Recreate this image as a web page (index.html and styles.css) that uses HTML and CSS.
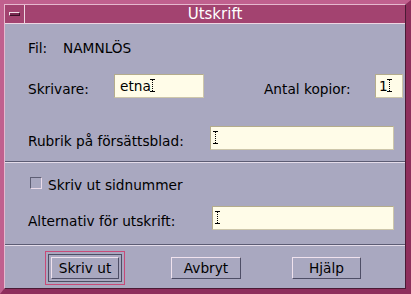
FILE: index.html
```html
<!DOCTYPE html>
<html>
<head>
<meta charset="utf-8">
<link rel="stylesheet" href="styles.css">
</head>
<body>
<div class="window">
  <div class="inner">
    <div class="titlebar">
      <div class="menubtn"><span class="bar"></span></div>
      <div class="title">Utskrift</div>
    </div>
    <div class="content">
      <section class="sec1">
        <div class="row row-fil"><span class="lbl lbl-fil">Fil:</span><span class="val">NAMNLÖS</span></div>
        <div class="row row-printer">
          <span class="lbl lbl-printer">Skrivare:</span>
          <div class="field f-printer"><span class="ftext">etna</span><svg class="ibeam ibeam-over" width="5" height="13" viewBox="0 0 5 13"><path d="M0 0.5H5M0 12.5H5" stroke="#000"/><path d="M2.5 1V12" stroke="#000" stroke-dasharray="1 1"/></svg></div>
          <span class="lbl lbl-copies">Antal kopior:</span>
          <div class="field f-copies"><span class="ftext">1</span><svg class="ibeam ibeam-over" width="5" height="13" viewBox="0 0 5 13"><path d="M0 0.5H5M0 12.5H5" stroke="#000"/><path d="M2.5 1V12" stroke="#000" stroke-dasharray="1 1"/></svg></div>
        </div>
        <div class="row row-rubrik">
          <span class="lbl lbl-rubrik">Rubrik på försättsblad:</span>
          <div class="field f-rubrik"><svg class="ibeam" width="5" height="13" viewBox="0 0 5 13"><path d="M0 0.5H5M0 12.5H5" stroke="#000"/><path d="M2.5 1V12" stroke="#000" stroke-dasharray="1 1"/></svg></div>
        </div>
      </section>
      <div class="sep sep1"></div>
      <section class="sec2">
        <div class="row row-check"><span class="checkbox"></span><span class="lbl lbl-check">Skriv ut sidnummer</span></div>
        <div class="row row-alt">
          <span class="lbl lbl-alt">Alternativ för utskrift:</span>
          <div class="field f-alt"><svg class="ibeam" width="5" height="13" viewBox="0 0 5 13"><path d="M0 0.5H5M0 12.5H5" stroke="#000"/><path d="M2.5 1V12" stroke="#000" stroke-dasharray="1 1"/></svg></div>
        </div>
      </section>
      <div class="sep sep2"></div>
      <section class="buttons">
        <div class="default-ring"><div class="ring-inner"><button class="btn btn-print">Skriv ut</button></div></div>
        <button class="btn btn-cancel">Avbryt</button>
        <button class="btn btn-help">Hjälp</button>
      </section>
    </div>
  </div>
</div>
</body>
</html>
```

FILE: styles.css
```css
* { box-sizing: border-box; }
html, body { margin: 0; padding: 0; background: #8e2e5c; }
body { font-family: "DejaVu Sans", sans-serif; font-size: 13.7px; color: #000; }

.window {
  width: 411px;
  height: 294px;
  border-style: solid;
  border-width: 4px 5px 5px 4px;
  border-color: #c0608e #8e2e5c #8e2e5c #c0608e;
  background: #b9557f;
}
.inner {
  width: 402px;
  height: 285px;
  border: 1px solid;
  border-color: #e6b8ce #4a1a34 #4a1a34 #e6b8ce;
  display: flex;
  flex-direction: column;
}
.titlebar {
  height: 19px;
  display: flex;
  background: #a34370;
  border-bottom: 1px solid #eed6e2;
}
.menubtn {
  width: 20px;
  height: 18px;
  border-right: 1px solid #eed6e2;
  padding: 7px 0 0 4px;
}
.bar {
  display: block;
  width: 11px;
  height: 4px;
  border: 1px solid;
  border-color: #f4e0ea #3a1028 #3a1028 #f4e0ea;
  background: #7a2a52;
}
.title {
  flex: 1;
  text-align: center;
  color: #fff;
  font-size: 15px;
  line-height: 18px;
}
.content {
  flex: 1;
  background: #a9a8c0;
  display: flex;
  flex-direction: column;
}
.row {
  display: flex;
  align-items: flex-start;
  height: 24px;
  padding-left: 23px;
}
.lbl, .val { line-height: 24px; white-space: nowrap; }
.sec1 { padding-top: 12px; }
.row-fil .lbl-fil { width: 35px; }
.row-printer { margin-top: 14px; }
.row-rubrik { margin-top: 28px; }
.row-printer .lbl, .row-rubrik .lbl, .row-alt .lbl { padding-top: 3px; }
.lbl-printer { width: 86px; }
.lbl-copies { width: 111px; margin-left: 60px; }
.lbl-rubrik { width: 182px; }
.lbl-alt { width: 184px; }

.field {
  height: 24px;
  background: #fffce8;
  border: 1px solid;
  border-color: #b4ac8c #cdc6aa #cdc6aa #b4ac8c;
  display: flex;
  align-items: flex-start;
  padding-left: 5px;
  line-height: 22px;
}
.f-printer { width: 90px; }
.f-copies { width: 28px; padding-left: 3px; }
.f-rubrik { width: 184px; padding-left: 2px; }
.f-alt { width: 182px; padding-left: 2px; }
.ibeam { display: block; margin-top: 4px; flex: none; }
.ibeam-over { margin-left: -1px; }

.sep {
  height: 2px;
  border-top: 1px solid #5c5c74;
  border-bottom: 1px solid #e4dcea;
}
.sep1 { margin-top: 11px; }
.sec2 { padding-top: 10px; }
.row-check { padding-left: 25px; }
.checkbox {
  width: 12px;
  height: 12px;
  margin-top: 4px;
  margin-right: 6px;
  border: 1px solid;
  border-color: #5e5e74 #ecdcea #ecdcea #5e5e74;
}
.row-alt { margin-top: 9px; }
.sep2 { margin-top: 14px; }

.buttons {
  display: flex;
  align-items: flex-start;
  padding: 5px 0 0 40px;
}
.default-ring {
  border: 1px solid #c84a78;
  padding: 2px;
}
.ring-inner {
  border: 1px solid #4e4e64;
  padding: 2px;
}
.btn {
  font-family: "DejaVu Sans", sans-serif;
  font-size: 13.7px;
  color: #000;
  background: #a9a8c0;
  height: 22px;
  line-height: 20px;
  padding: 0;
  margin: 0;
  border: 1px solid;
  border-color: #f0e2ee #4e4e66 #4e4e66 #f0e2ee;
  text-align: center;
}
.btn-print { width: 68px; display: block; }
.btn-cancel { width: 70px; margin: 6px 0 0 46px; }
.btn-help { width: 69px; margin: 6px 0 0 51px; }
```
